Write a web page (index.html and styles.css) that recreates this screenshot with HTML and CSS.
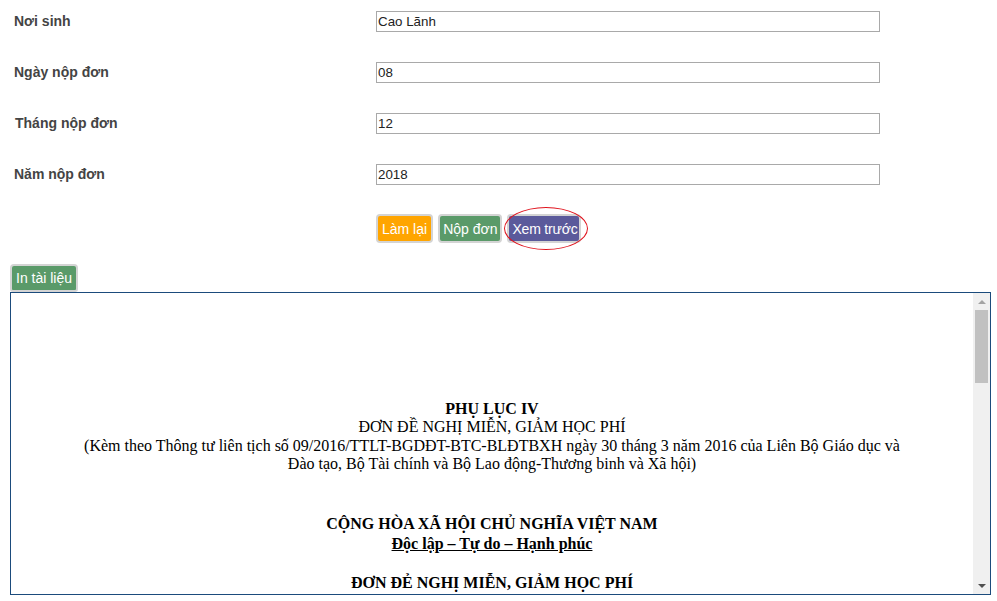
FILE: index.html
```html
<!DOCTYPE html>
<html lang="vi">
<head>
<meta charset="utf-8">
<title>Đơn đề nghị miễn, giảm học phí</title>
<link rel="stylesheet" href="styles.css">
</head>
<body>
<div class="form">
  <div class="row"><div class="label">Nơi sinh</div><input class="input" type="text" value="Cao Lãnh"></div>
  <div class="row"><div class="label">Ngày nộp đơn</div><input class="input" type="text" value="08"></div>
  <div class="row"><div class="label shift">Tháng nộp đơn</div><input class="input" type="text" value="12"></div>
  <div class="row"><div class="label">Năm nộp đơn</div><input class="input" type="text" value="2018"></div>
  <div class="actions">
    <button class="btn btn-orange">Làm lại</button>
    <button class="btn btn-green">Nộp đơn</button>
    <span class="mark"><button class="btn btn-purple">Xem trước</button><span class="ring"></span></span>
  </div>
</div>
<div class="print-bar"><button class="btn btn-green btn-print">In tài liệu</button></div>
<div class="viewer">
  <div class="doc">
    <div class="block1">
      <div class="line bold">PHỤ LỤC IV</div>
      <div class="line">ĐƠN ĐỀ NGHỊ MIỄN, GIẢM HỌC PHÍ</div>
      <div class="line wrap">(Kèm theo Thông tư liên tịch số 09/2016/TTLT-BGDĐT-BTC-BLĐTBXH ngày 30 tháng 3 năm 2016 của Liên Bộ Giáo dục và Đào tạo, Bộ Tài chính và Bộ Lao động-Thương binh và Xã hội)</div>
    </div>
    <div class="line bold nation">CỘNG HÒA XÃ HỘI CHỦ NGHĨA VIỆT NAM</div>
    <div class="line bold motto"><u>Độc lập – Tự do – Hạnh phúc</u></div>
    <div class="line bold title">ĐƠN ĐẺ NGHỊ MIỄN, GIẢM HỌC PHÍ</div>
  </div>
  <div class="scrollbar">
    <div class="arrow"><span class="tri-up"></span></div>
    <div class="thumb"></div>
    <div class="track"></div>
    <div class="arrow"><span class="tri-down"></span></div>
  </div>
</div>
</body>
</html>
```
FILE: styles.css
```css
body {
  margin: 0;
  background: #fff;
  font-family: "Liberation Sans", Arial, sans-serif;
}
.form {
  padding: 11px 0 0 14px;
}
.row {
  display: flex;
  align-items: center;
  height: 21px;
  margin-bottom: 30px;
}
.label {
  width: 362px;
  flex: none;
  font-size: 14px;
  font-weight: bold;
  color: #444;
  margin-top: -2px;
}
.label.shift {
  padding-left: 1px;
  width: 361px;
}
.input {
  width: 504px;
  height: 21px;
  box-sizing: border-box;
  margin: 0;
  border: 1px solid #a9a9a9;
  padding: 0 1px;
  font-family: "Liberation Sans", Arial, sans-serif;
  font-size: 13.333px;
  color: #222;
  background: #fff;
  outline: none;
}
.actions {
  display: flex;
  gap: 5px;
  margin-left: 362px;
  margin-top: -1px;
}
.btn {
  margin: 0;
  border: 2px solid #d4d4d4;
  border-radius: 4px;
  padding: 5px 3px 4px;
  font-family: "Liberation Sans", Arial, sans-serif;
  font-size: 14px;
  line-height: 16px;
  color: #fff;
  cursor: pointer;
}
.btn-orange { background: #ffa500; padding-left: 4px; padding-right: 4px; }
.btn-green { background: #5a9a69; }
.btn-purple { background: #5b5a9b; padding-left: 3px; padding-right: 2px; letter-spacing: -0.2px; }
.mark {
  position: relative;
  display: inline-block;
}
.ring {
  position: absolute;
  left: -3px;
  top: -7px;
  width: 82px;
  height: 41px;
  border: 1px solid #e0141e;
  border-radius: 50%;
  pointer-events: none;
}
.print-bar {
  padding: 21px 0 0 10px;
  display: flex;
}
.btn-print {
  padding: 4px 4px 4px;
  border-radius: 4px 4px 3px 3px;
}
.viewer {
  margin-left: 10px;
  width: 981px;
  height: 303px;
  box-sizing: border-box;
  border: 1px solid #1b4b7c;
  display: flex;
}
.doc {
  flex: 1;
  overflow: hidden;
  text-align: center;
  font-family: "Liberation Serif", "Times New Roman", serif;
  font-size: 16px;
  color: #000;
  padding-top: 107px;
}
.line {
  line-height: 18.4px;
}
.bold { font-weight: bold; }
.wrap {
  width: 832px;
  margin: 0 auto;
}
.nation { margin-top: 41px; }
.motto { margin-top: 1.6px; }
.title { margin-top: 20.6px; }
.scrollbar {
  width: 17px;
  flex: none;
  background: #f0f0f0;
  display: flex;
  flex-direction: column;
}
.arrow {
  height: 17px;
  display: flex;
  align-items: center;
  justify-content: center;
  flex: none;
}
.tri-up {
  width: 0;
  height: 0;
  border-left: 4px solid transparent;
  border-right: 4px solid transparent;
  border-bottom: 4px solid #a3a3a3;
}
.tri-down {
  width: 0;
  height: 0;
  border-left: 4px solid transparent;
  border-right: 4px solid transparent;
  border-top: 4px solid #505050;
}
.thumb {
  height: 73px;
  margin: 0 2px;
  background: #c1c1c1;
  flex: none;
}
.track { flex: 1; }
```
